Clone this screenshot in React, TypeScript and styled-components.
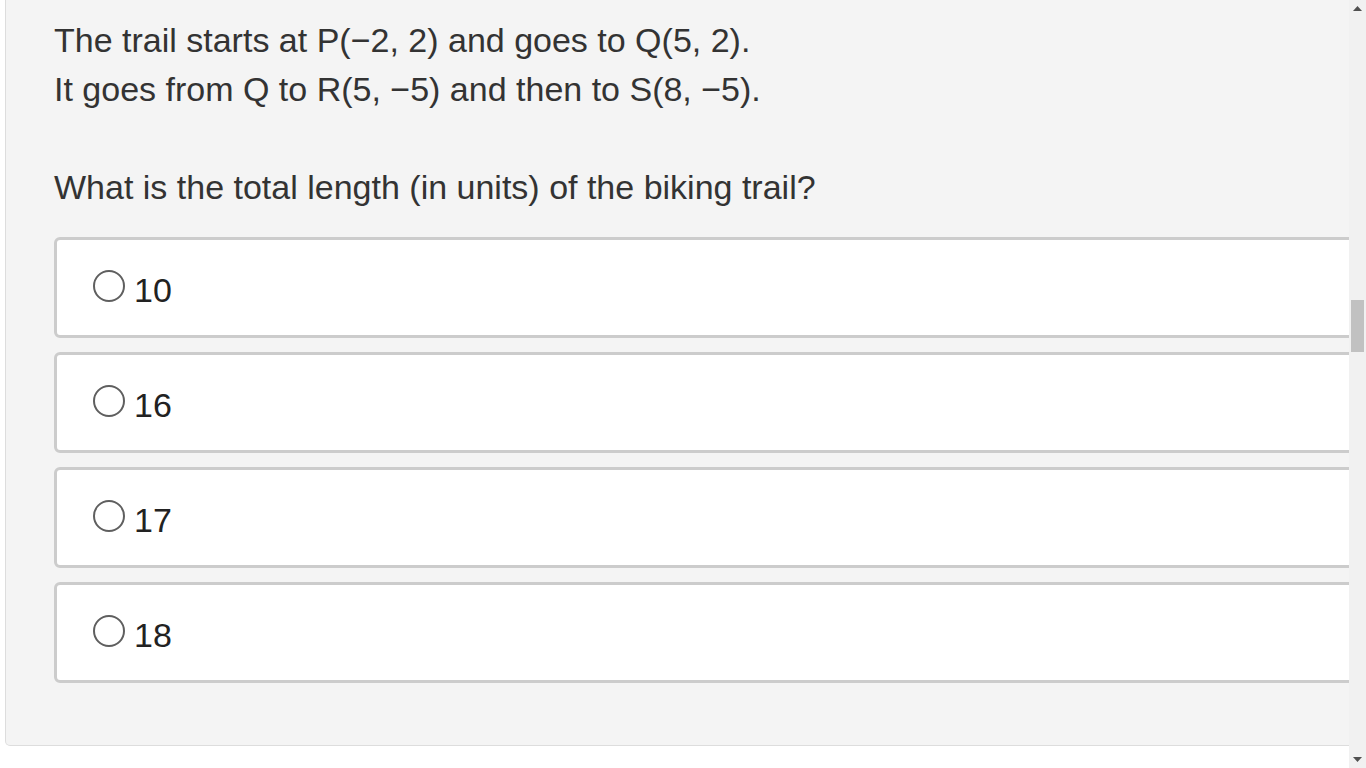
import React from 'react';
import styled, { createGlobalStyle } from 'styled-components';

const GlobalStyle = createGlobalStyle`
  html, body {
    margin: 0;
    padding: 0;
    background: #ffffff;
    overflow: hidden;
  }
  body {
    font-family: "Liberation Sans", Arial, sans-serif;
    color: #333333;
  }
`;

const choices = ['10', '16', '17', '18'];

export default function App() {
  return (
    <>
      <GlobalStyle />
      <Screen>
        <Viewport>
          <Panel>
            <Prompt>
              The trail starts at P(−2, 2) and goes to Q(5, 2).
              <br />
              It goes from Q to R(5, −5) and then to S(8, −5).
            </Prompt>
            <Question>What is the total length (in units) of the biking trail?</Question>
            <ChoiceList>
              {choices.map((c) => (
                <Choice key={c}>
                  <Radio />
                  <ChoiceText>{c}</ChoiceText>
                </Choice>
              ))}
            </ChoiceList>
          </Panel>
        </Viewport>
        <Scrollbar>
          <Arrow>
            <svg width="9" height="5" viewBox="0 0 9 5">
              <polygon points="0,5 9,5 4.5,0" fill="#505050" />
            </svg>
          </Arrow>
          <Track>
            <Thumb />
          </Track>
          <Arrow>
            <svg width="9" height="5" viewBox="0 0 9 5">
              <polygon points="0,0 9,0 4.5,5" fill="#505050" />
            </svg>
          </Arrow>
        </Scrollbar>
      </Screen>
    </>
  );
}

const Screen = styled.div`
  display: flex;
  width: 1366px;
  height: 768px;
  overflow: hidden;
`;

const Viewport = styled.div`
  flex: 1;
  overflow: hidden;
  padding-left: 5px;
`;

const Panel = styled.div`
  margin-right: -60px;
  background: #f4f4f4;
  border: 1px solid #dddddd;
  border-top: none;
  border-radius: 0 0 0 5px;
  padding: 16px 0 62px 48px;
`;

const Prompt = styled.p`
  margin: 0 0 50px;
  font-size: 34px;
  line-height: 48.5px;
`;

const Question = styled.p`
  margin: 0 0 26px;
  font-size: 34px;
  line-height: 48px;
`;

const ChoiceList = styled.div`
  display: flex;
  flex-direction: column;
  gap: 14px;
`;

const Choice = styled.label`
  display: flex;
  align-items: center;
  height: 95px;
  padding-left: 36px;
  background: #ffffff;
  border: 3px solid #cccccc;
  border-radius: 6px;
`;

const Radio = styled.span`
  box-sizing: border-box;
  width: 32px;
  height: 32px;
  margin-top: -3px;
  border: 2px solid #5f5f5f;
  border-radius: 50%;
  background: #ffffff;
  flex-shrink: 0;
`;

const ChoiceText = styled.span`
  margin-left: 9px;
  margin-top: 4px;
  font-size: 34px;
  line-height: 48px;
  color: #222222;
`;

const Scrollbar = styled.div`
  width: 17px;
  flex-shrink: 0;
  display: flex;
  flex-direction: column;
  background: #f1f1f1;
`;

const Arrow = styled.div`
  height: 17px;
  display: flex;
  align-items: center;
  justify-content: center;
`;

const Track = styled.div`
  flex: 1;
  padding-top: 283px;
  display: flex;
  justify-content: center;
`;

const Thumb = styled.div`
  width: 13px;
  height: 52px;
  background: #c1c1c1;
`;
